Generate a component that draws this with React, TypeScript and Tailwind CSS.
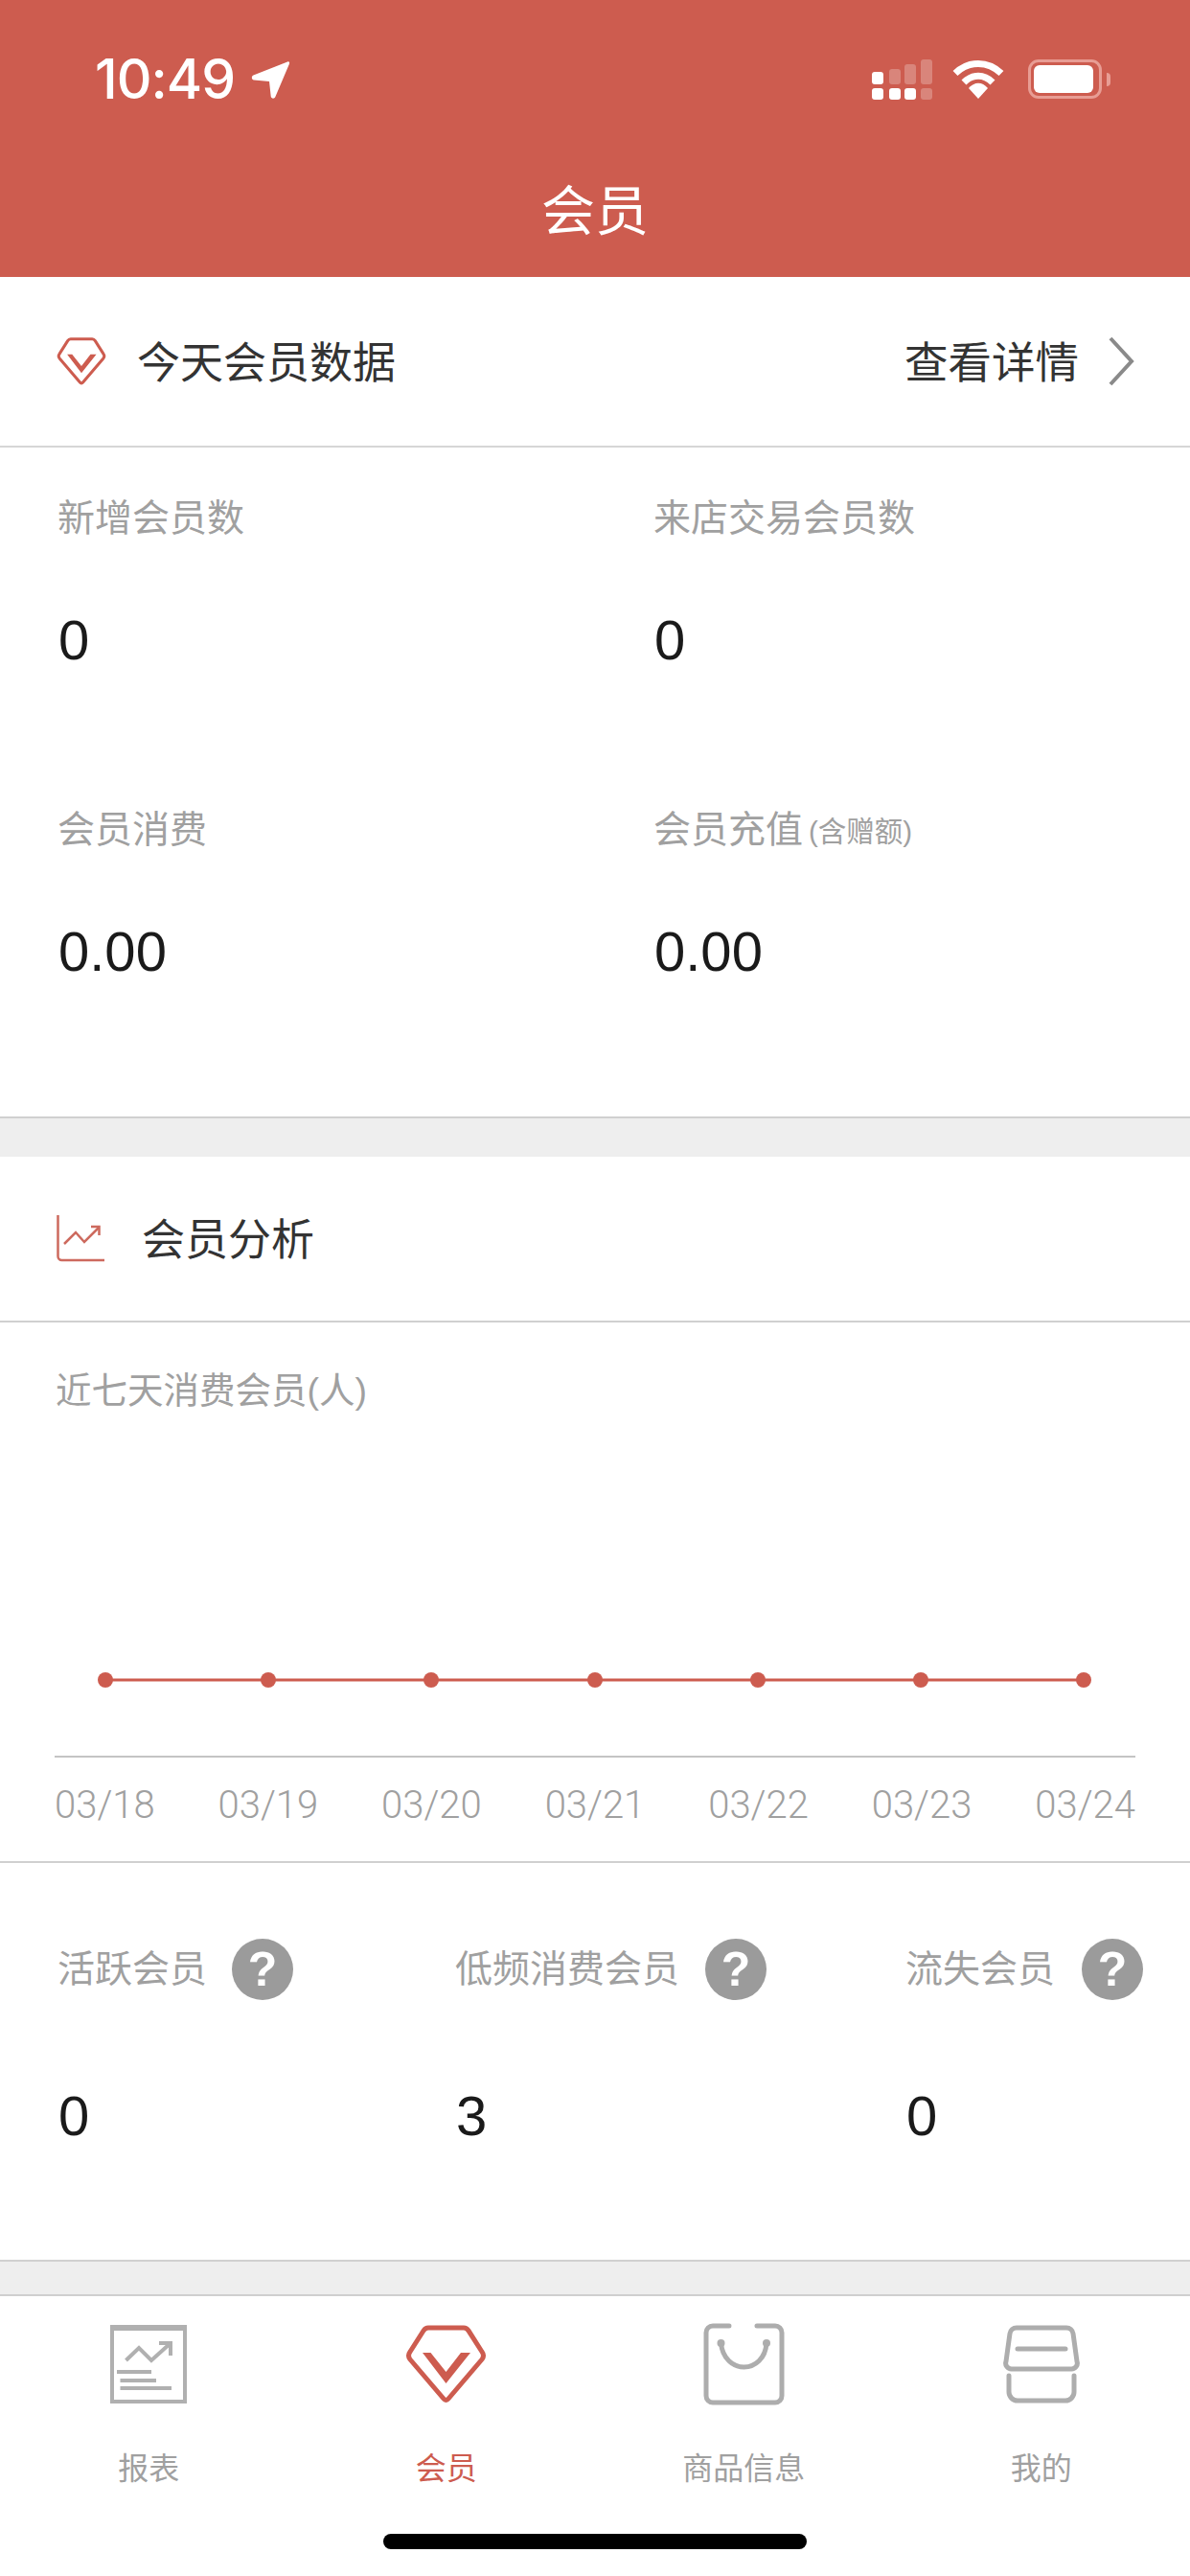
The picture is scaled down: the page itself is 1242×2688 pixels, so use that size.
const cjk = "font-['Liberation_Sans','Noto_Sans_CJK_SC',sans-serif]";

function Diamond({ w, h, stroke }: { w: number; h: number; stroke: number }) {
  return (
    <svg width={w} height={h} viewBox="0 0 85 82" fill="none" stroke="#cd5c4f" strokeLinejoin="round" strokeLinecap="butt">
      <path d="M24 3 H61 Q64 3 66 6 L80 28 Q83 32 80 36 L45 77 Q42.5 80 40 77 L5 36 Q2 32 5 28 L19 6 Q21 3 24 3 Z" strokeWidth={stroke} />
      <path d="M18 29 H26.5 L42.5 49 L58 29 H68 L42.5 61 Z" fill="#cd5c4f" stroke="none" />
    </svg>
  );
}

function Question() {
  return (
    <span className="flex h-[64px] w-[64px] shrink-0 items-center justify-center rounded-full bg-[#9b9b9b] font-['Liberation_Sans',sans-serif] text-[50px] leading-none font-bold text-white">
      ?
    </span>
  );
}

function Metric({ label, note, value }: { label: string; note?: string; value: string }) {
  return (
    <div className="h-[325px]">
      <div className="flex h-[54px] items-center pt-[1px] text-[39px] leading-[54px] text-[#a0a0a0]">
        {label}
        {note && <span className="mt-[4px] ml-[6px] text-[29.5px]">{note}</span>}
      </div>
      <div className="mt-[66px] h-[70px] pl-[1px] text-[58px] leading-[70px] text-[#1a1a1a]">{value}</div>
    </div>
  );
}

function Status({ label, value, cls }: { label: string; value: string; cls: string }) {
  return (
    <div className={cls}>
      <div className="flex h-[66px] items-center justify-start text-[39px] text-[#a0a0a0]">
        <span>{label}</span>
        <Question />
      </div>
      <div className="mt-[85px] h-[70px] pl-[1px] text-[58px] leading-[70px] text-[#1a1a1a]">{value}</div>
    </div>
  );
}

const tabs = [
  {
    label: "报表",
    active: false,
    icon: (
      <svg width="80" height="82" viewBox="0 0 80 82" fill="none" stroke="#b0b0b0" strokeWidth="4">
        <path d="M2 2 H78 V80 H2 Z" />
        <path d="M0 3 H80" strokeWidth="6" />
        <path d="M16.5 37 L30 24 L43 37 L63 19" />
        <path d="M51 19 H63 V32" />
        <path d="M7 49 H43 M10.5 58 H48 M10.5 66 H64" />
      </svg>
    ),
  },
  { label: "会员", active: true, icon: <Diamond w={85} h={82} stroke={5} /> },
  {
    label: "商品信息",
    active: false,
    icon: (
      <svg width="85" height="86" viewBox="0 0 85 86" fill="none" stroke="#adadad" strokeWidth="5" strokeLinecap="round">
        <path d="M27 3 H10 a7 7 0 0 0 -7 7 V76 a7 7 0 0 0 7 7 H75 a7 7 0 0 0 7 -7 V10 a7 7 0 0 0 -7 -7 H56" />
        <path d="M18.5 21 C20 37 31 46 42.5 46 C54 46 65 37 66 21" />
        <circle cx="18.5" cy="21" r="4" fill="#adadad" stroke="none" />
        <circle cx="66" cy="21" r="4" fill="#adadad" stroke="none" />
      </svg>
    ),
  },
  {
    label: "我的",
    active: false,
    icon: (
      <svg width="80" height="82" viewBox="0 0 80 82" fill="none" stroke="#adadad" strokeWidth="5" strokeLinecap="round">
        <path d="M14 3 H66 a7 7 0 0 1 7 6 L77 38 a6 6 0 0 1 -6 8 H9 a6 6 0 0 1 -6 -8 L7 9 a7 7 0 0 1 7 -6 Z" />
        <path d="M15 25 H65" />
        <path d="M6 53 V70 a9 9 0 0 0 9 9 H65 a9 9 0 0 0 9 -9 V53" />
      </svg>
    ),
  },
];

export default function App() {
  return (
    <div className={`${cjk} flex h-[2688px] w-[1242px] flex-col overflow-hidden bg-white`}>
      <header className="h-[289px] shrink-0 bg-[#cd5c4f] text-white">
        <div className="flex h-[167px] items-start justify-between pt-[62px] pr-[83px] pl-[99px]">
          <div className="flex items-center gap-[17px]">
            <span className="font-['Inter',sans-serif] text-[57px] leading-[42px] font-medium tracking-[-1px]">10:49</span>
            <svg width="41" height="41" viewBox="0 0 42 42" fill="#fff">
              <path d="M39 1.5 C40.5 1 41.5 2 41 3.5 L26 39 C25 41.5 21.5 41 21.2 38.5 L19.5 22.5 L3 21 C0.5 20.7 0 17 2.5 16 Z" />
            </svg>
          </div>
          <div className="-mt-[2px] flex items-start">
            <svg width="64" height="44" viewBox="0 0 64 44" className="mt-[1px]">
              <g fill="#fff">
                <rect x="0" y="14" width="12" height="13" rx="3" />
                <rect x="0" y="31" width="12" height="12" rx="3" />
                <rect x="18" y="31" width="12" height="12" rx="3" />
                <rect x="34" y="31" width="12" height="12" rx="3" />
              </g>
              <g fill="#fff" fillOpacity="0.25">
                <rect x="18" y="11" width="12" height="16" rx="3" />
                <rect x="34" y="6" width="12" height="21" rx="3" />
                <rect x="51" y="1" width="12" height="26" rx="3" />
                <rect x="51" y="31" width="12" height="12" rx="3" />
              </g>
            </svg>
            <svg width="54" height="42" viewBox="0 0 54 42" fill="none" stroke="#fff" strokeWidth="7" className="mt-[2px] ml-[20px]">
              <path d="M3 14.5 C17 1 37 1 51 14.5" />
              <path d="M12 24 C21 15 33 15 42 24" />
              <path d="M17 30 C23 23 31 23 37 30 L27 41 Z" fill="#fff" stroke="none" />
            </svg>
            <div className="mt-[2px] ml-[25px] flex items-center">
              <div className="flex h-[41px] w-[77px] items-center rounded-[11px] border-[3px] border-[#e89d94] p-[3px]">
                <div className="h-[29px] w-[62px] rounded-[6px] bg-white" />
              </div>
              <div className="ml-[5px] h-[14px] w-[4px] rounded-r-[4px] bg-[#e89d94]" />
            </div>
          </div>
        </div>
        <h1 className="h-[108px] text-center text-[56px] leading-[108px] font-normal">会员</h1>
      </header>

      <section className="flex h-[178px] shrink-0 items-center justify-between border-b-2 border-[#d6d6d6] pr-[58px] pl-[59px]">
        <div className="flex items-center gap-[32px]">
          <Diamond w={52} h={50} stroke={5} />
          <span className="pt-[6px] text-[45px] text-[#333333]">今天会员数据</span>
        </div>
        <div className="flex items-center gap-[30px]">
          <span className="pt-[6px] text-[45.5px] text-[#333333]">查看详情</span>
          <svg width="28" height="52" viewBox="0 0 28 52" fill="none" stroke="#8a8a8a" strokeWidth="4">
            <path d="M3 2 L25 26 L3 50" />
          </svg>
        </div>
      </section>

      <section className="grid h-[700px] shrink-0 grid-cols-[622px_1fr] content-start border-b-2 border-[#d0d0d0] pt-[46px] pl-[60px]">
        <Metric label="新增会员数" value="0" />
        <Metric label="来店交易会员数" value="0" />
        <Metric label="会员消费" value="0.00" />
        <Metric label="会员充值" note="(含赠额)" value="0.00" />
      </section>

      <div className="h-[40px] shrink-0 bg-[#eeeeee]" />

      <section className="flex h-[173px] shrink-0 items-center gap-[39px] border-b-2 border-[#d0d0d0] pl-[59px]">
        <svg width="50" height="50" viewBox="0 0 50 50" fill="none" stroke="#cd6a5e" strokeWidth="2.5">
          <path d="M1.5 0 V43 a4 4 0 0 0 4 4 H50" />
          <path d="M8 30 L20 18 L29 28 L44 13" />
          <path d="M36 12 H44.5 V21" />
        </svg>
        <span className="pt-[4px] text-[45px] text-[#333333]">会员分析</span>
      </section>

      <section className="h-[564px] shrink-0 border-b-2 border-[#d0d0d0]">
        <div className="h-[140px] pt-[44px] pl-[58px] text-[37.5px] leading-[54px] text-[#a0a0a0]">近七天消费会员(人)</div>
        <div className="mx-[57px] w-[1128px]">
          <svg width="1128" height="314" viewBox="0 0 1128 314" className="block">
            <path d="M53 233 H1074" stroke="#cd5c4f" strokeWidth="3" />
            {[53, 223, 393, 564, 734, 904, 1074].map((x) => (
              <circle key={x} cx={x} cy="233" r="8" fill="#cd5c4f" />
            ))}
            <path d="M0 313 H1128" stroke="#c4c4c4" strokeWidth="2" />
          </svg>
          <div className="flex justify-between pt-[25px] font-['Roboto',sans-serif] text-[40px] leading-[50px] font-light text-[#a0a0a0]">
            {["03/18", "03/19", "03/20", "03/21", "03/22", "03/23", "03/24"].map((d) => (
              <span key={d}>{d}</span>
            ))}
          </div>
        </div>
      </section>

      <section className="flex h-[416px] shrink-0 border-b-2 border-[#d0d0d0] pt-[78px]">
        <Status label="活跃会员" value="0" cls="w-[475px] pl-[60px] [&>div:first-child]:gap-[26px]" />
        <Status label="低频消费会员" value="3" cls="w-[470px] [&>div:first-child]:gap-[27px]" />
        <Status label="流失会员" value="0" cls="flex-1 [&>div:first-child]:gap-[28px]" />
      </section>

      <div className="h-[36px] shrink-0 border-b-2 border-[#cfcfcf] bg-[#eeeeee]" />

      <nav className="relative grid flex-1 grid-cols-4 bg-white pt-[28px]">
        {tabs.map((t) => (
          <div key={t.label} className="flex flex-col items-center">
            <div className="flex h-[86px] items-center justify-center">{t.icon}</div>
            <span className={`mt-[43px] text-[32px] leading-[46px] ${t.active ? "text-[#cd5c4f]" : "text-[#a0a0a0]"}`}>{t.label}</span>
          </div>
        ))}
        <div className="absolute top-[248px] left-[400px] h-[16px] w-[442px] rounded-full bg-black" />
      </nav>
    </div>
  );
}
